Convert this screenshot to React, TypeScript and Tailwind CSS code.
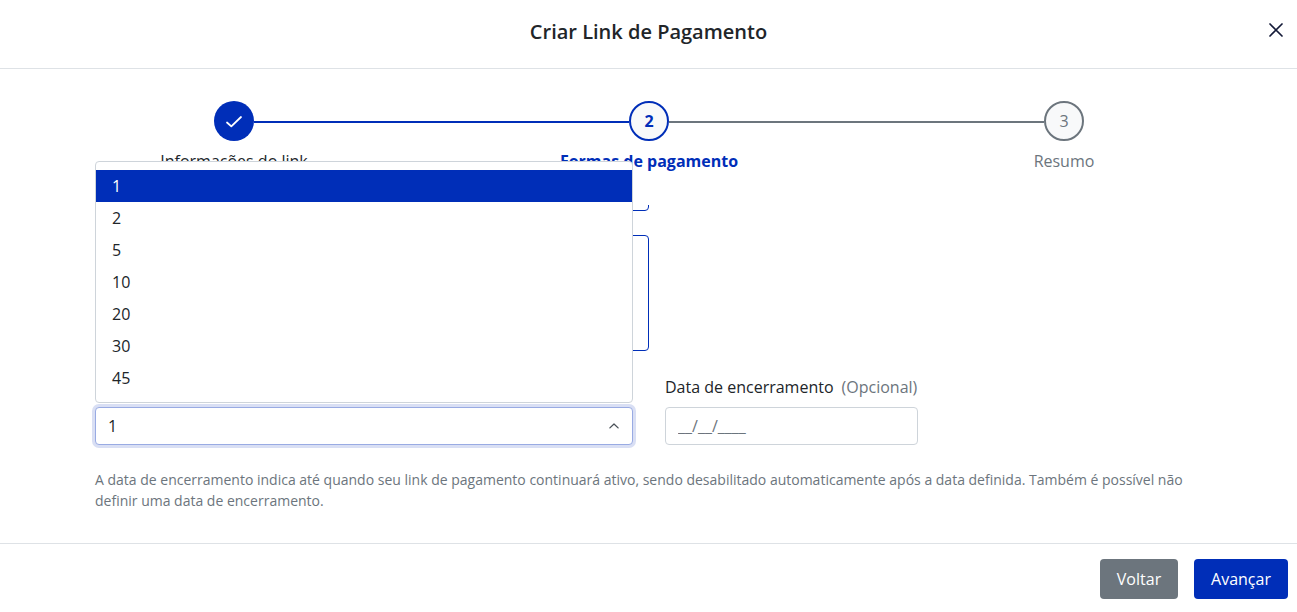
const options = ['1', '2', '5', '10', '20', '30', '45'];

function Stepper() {
  return (
    <ol className="grid h-[136px] shrink-0 grid-cols-3 pt-8 pr-[25.5px] pl-[26.5px] leading-6">
      <li className="flex flex-col items-center">
        <div className="flex h-10 w-full items-center">
          <span className="flex-1" />
          <span className="flex size-10 items-center justify-center rounded-full bg-[#002eb8]">
            <svg width="18" height="14" viewBox="0 0 18 14" fill="none" stroke="#fff" strokeWidth="1.8" strokeLinecap="round" strokeLinejoin="round">
              <path d="M2 8.5L6.3 12.3L16 3" />
            </svg>
          </span>
          <span className="mt-0.5 h-0.5 flex-1 bg-[#002eb8]" />
        </div>
        <span className="mt-2 text-[#212529]">Informações do link</span>
      </li>
      <li className="flex flex-col items-center">
        <div className="flex h-10 w-full items-center">
          <span className="mt-0.5 h-0.5 flex-1 bg-[#002eb8]" />
          <span className="flex size-10 items-center justify-center rounded-full border-2 border-[#002eb8] bg-[#f8f9fa] font-bold text-[#002eb8]">2</span>
          <span className="mt-0.5 h-0.5 flex-1 bg-[#6c757d]" />
        </div>
        <span className="mt-2 font-bold text-[#002eb8]">Formas de pagamento</span>
      </li>
      <li className="flex flex-col items-center">
        <div className="flex h-10 w-full items-center">
          <span className="mt-0.5 h-0.5 flex-1 bg-[#6c757d]" />
          <span className="flex size-10 items-center justify-center rounded-full border-2 border-[#6c757d] bg-[#f8f9fa] text-[#6c757d]">3</span>
          <span className="flex-1" />
        </div>
        <span className="mt-2 text-[#6c757d]">Resumo</span>
      </li>
    </ol>
  );
}

function InstallmentSelect() {
  return (
    <div className="relative w-[538px]">
      <ul className="absolute bottom-full left-0 z-10 mb-1 w-full rounded border border-[#ced4da] bg-white py-2">
        {options.map((o, i) => (
          <li key={o} className={i === 0 ? 'h-8 bg-[#002eb8] px-4 py-1 leading-6 text-white' : 'h-8 px-4 py-1 leading-6'}>
            {o}
          </li>
        ))}
      </ul>
      <button className="flex h-[38px] w-full items-center justify-between rounded border border-[#99abe3] bg-white pr-[13px] pl-3 leading-6 shadow-[0_0_0_3px_#d9dff4]">
        <span>1</span>
        <svg width="10" height="6" viewBox="0 0 10 6" fill="none" stroke="#495057" strokeWidth="1.3" strokeLinecap="round" strokeLinejoin="round">
          <path d="M0.9 4.9L5 1L9.1 4.9" />
        </svg>
      </button>
    </div>
  );
}

export default function App() {
  return (
    <div className="flex h-[612px] w-full flex-col overflow-hidden bg-white font-['Open_Sans',sans-serif] text-base text-[#212529]">
      <header className="grid h-[69px] shrink-0 grid-cols-[1fr_auto_1fr] items-center border-b border-[#dee2e6]">
        <h1 className="col-start-2 -mt-1 text-xl leading-[30px] font-semibold">Criar Link de Pagamento</h1>
        <button aria-label="Fechar" className="mr-[14px] mb-[9px] justify-self-end">
          <svg width="14" height="14" viewBox="0 0 14 14" fill="none" stroke="#141a38" strokeWidth="1.7" strokeLinecap="round">
            <path d="M1 1L13 13M13 1L1 13" />
          </svg>
        </button>
      </header>

      <Stepper />

      <main className="flex h-[338px] shrink-0 flex-col px-[95px]">
        <div className="flex h-1.5 w-[554px] flex-col justify-end overflow-hidden">
          <div className="h-16 shrink-0 rounded border border-[#002eb8]" />
        </div>
        <div className="mt-6 h-[116px] w-[554px] shrink-0 rounded border border-[#002eb8]" />
        <div className="mt-6 flex items-end gap-8">
          <InstallmentSelect />
          <label className="flex flex-col gap-2 leading-6">
            <span className="flex gap-2">
              Data de encerramento <span className="text-[#6c757d]">(Opcional)</span>
            </span>
            <input className="h-[38px] w-[253px] rounded border border-[#ced4da] px-3 placeholder:text-[#6c757d]" placeholder="__/__/____" />
          </label>
        </div>
        <p className="mt-6 w-[1107px] text-sm leading-[21px] text-[#6c757d]">
          A data de encerramento indica até quando seu link de pagamento continuará ativo, sendo desabilitado automaticamente após a data definida. Também é possível não definir uma data de encerramento.
        </p>
      </main>

      <footer className="flex h-[69px] shrink-0 justify-end gap-4 border-t border-[#dee2e6] pt-[15px] pr-[9px] text-white">
        <button className="h-10 w-[78px] rounded bg-[#6c757d]">Voltar</button>
        <button className="h-10 w-[94px] rounded bg-[#002eb8]">Avançar</button>
      </footer>
    </div>
  );
}
